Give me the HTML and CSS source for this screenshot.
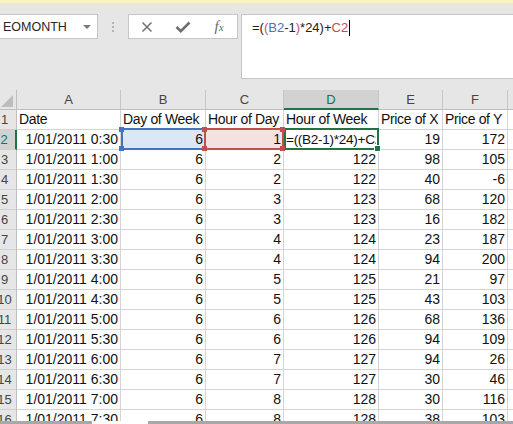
FILE: index.html
```html
<!DOCTYPE html>
<html>
<head>
<meta charset="utf-8">
<link rel="stylesheet" href="styles.css">
</head>
<body>
<div class="app">
  <div class="topstrip"></div>
  <div class="toolbar">
    <div class="namebox"><span>EOMONTH</span><span class="caret"></span></div>
    <div class="grip"><i></i><i></i><i></i></div>
    <div class="fxbtns">
      <span class="btn"><svg width="12" height="12" viewBox="0 0 12 12"><path d="M1.5 1.5 L10.5 10.5 M10.5 1.5 L1.5 10.5" stroke="#767676" stroke-width="1.6" fill="none"/></svg></span>
      <span class="btn"><svg width="16" height="12" viewBox="0 0 16 12"><path d="M1.5 6 L5.8 10.2 L14.5 1.5" stroke="#6f6f6f" stroke-width="2.6" fill="none"/></svg></span>
      <span class="btn fx"><i>f<small>x</small></i></span>
    </div>
    <div class="formula"><span>=(</span><span class="paren">(</span><span class="refb">B2</span><span>-1</span><span class="paren">)</span><span>*24)+</span><span class="refc">C2</span><span class="cursor"></span></div>
  </div>
  <div class="sheet">
    <div class="grid">
      <div class="corner"><svg width="23" height="19" viewBox="0 0 23 19"><polygon points="20,5 20,17 8,17" fill="#bdbdbd"/></svg></div>
      <div class="ch">A</div><div class="ch">B</div><div class="ch">C</div><div class="ch ch-act">D</div><div class="ch">E</div><div class="ch">F</div><div class="ch"></div>

      <div class="rh">1</div><div class="c lbl">Date</div><div class="c lbl">Day of Week</div><div class="c lbl">Hour of Day</div><div class="c lbl">Hour of Week</div><div class="c lbl">Price of X</div><div class="c lbl">Price of Y</div><div class="c"></div>

      <div class="rh rh-act">2</div><div class="c n">1/01/2011 0:30</div>
      <div class="c n sel ref-b">6<i class="h tl"></i><i class="h bl"></i></div>
      <div class="c n sel ref-c">1<i class="h tl"></i><i class="h bl"></i><i class="h tr"></i><i class="h br"></i></div>
      <div class="c sel act"><span class="clip">=((B2-1)*24)+C2</span><i class="h fill"></i></div>
      <div class="c n">19</div><div class="c n">172</div><div class="c"></div>

      <div class="rh">3</div><div class="c n">1/01/2011 1:00</div><div class="c n">6</div><div class="c n">2</div><div class="c n">122</div><div class="c n">98</div><div class="c n">105</div><div class="c"></div>
      <div class="rh">4</div><div class="c n">1/01/2011 1:30</div><div class="c n">6</div><div class="c n">2</div><div class="c n">122</div><div class="c n">40</div><div class="c n">-6</div><div class="c"></div>
      <div class="rh">5</div><div class="c n">1/01/2011 2:00</div><div class="c n">6</div><div class="c n">3</div><div class="c n">123</div><div class="c n">68</div><div class="c n">120</div><div class="c"></div>
      <div class="rh">6</div><div class="c n">1/01/2011 2:30</div><div class="c n">6</div><div class="c n">3</div><div class="c n">123</div><div class="c n">16</div><div class="c n">182</div><div class="c"></div>
      <div class="rh">7</div><div class="c n">1/01/2011 3:00</div><div class="c n">6</div><div class="c n">4</div><div class="c n">124</div><div class="c n">23</div><div class="c n">187</div><div class="c"></div>
      <div class="rh">8</div><div class="c n">1/01/2011 3:30</div><div class="c n">6</div><div class="c n">4</div><div class="c n">124</div><div class="c n">94</div><div class="c n">200</div><div class="c"></div>
      <div class="rh">9</div><div class="c n">1/01/2011 4:00</div><div class="c n">6</div><div class="c n">5</div><div class="c n">125</div><div class="c n">21</div><div class="c n">97</div><div class="c"></div>
      <div class="rh">10</div><div class="c n">1/01/2011 4:30</div><div class="c n">6</div><div class="c n">5</div><div class="c n">125</div><div class="c n">43</div><div class="c n">103</div><div class="c"></div>
      <div class="rh">11</div><div class="c n">1/01/2011 5:00</div><div class="c n">6</div><div class="c n">6</div><div class="c n">126</div><div class="c n">68</div><div class="c n">136</div><div class="c"></div>
      <div class="rh">12</div><div class="c n">1/01/2011 5:30</div><div class="c n">6</div><div class="c n">6</div><div class="c n">126</div><div class="c n">94</div><div class="c n">109</div><div class="c"></div>
      <div class="rh">13</div><div class="c n">1/01/2011 6:00</div><div class="c n">6</div><div class="c n">7</div><div class="c n">127</div><div class="c n">94</div><div class="c n">26</div><div class="c"></div>
      <div class="rh">14</div><div class="c n">1/01/2011 6:30</div><div class="c n">6</div><div class="c n">7</div><div class="c n">127</div><div class="c n">30</div><div class="c n">46</div><div class="c"></div>
      <div class="rh">15</div><div class="c n">1/01/2011 7:00</div><div class="c n">6</div><div class="c n">8</div><div class="c n">128</div><div class="c n">30</div><div class="c n">116</div><div class="c"></div>
      <div class="rh">16</div><div class="c n">1/01/2011 7:30</div><div class="c n">6</div><div class="c n">8</div><div class="c n">128</div><div class="c n">38</div><div class="c n">103</div><div class="c"></div>
    </div>
  </div>
  <div class="hbar"><span class="seg"></span><span class="gap"></span><span class="seg rest"></span></div>
</div>
</body>
</html>
```
FILE: styles.css
```css
* { box-sizing: border-box; }
html, body { margin: 0; padding: 0; }
body {
  width: 513px;
  height: 424px;
  overflow: hidden;
  background: #e6e6e6;
  font-family: "Liberation Sans", Arial, sans-serif;
}
.app { display: flex; flex-direction: column; height: 424px; }
.topstrip { height: 3px; background: #fbf2c2; flex: none; }

.toolbar {
  display: flex;
  align-items: flex-start;
  height: 87px;
  padding-top: 11px;
  flex: none;
}
.namebox {
  width: 99px;
  height: 25px;
  margin-left: -1px;
  background: #fff;
  border: 1px solid #c6c6c6;
  display: flex;
  align-items: center;
  justify-content: space-between;
  padding: 0 6px 0 3px;
  font-size: 12.5px;
  color: #262626;
}
.caret {
  width: 0; height: 0;
  border-left: 4px solid transparent;
  border-right: 4px solid transparent;
  border-top: 4px solid #7a7a7a;
}
.grip {
  width: 30px;
  height: 25px;
  display: flex;
  flex-direction: column;
  align-items: center;
  justify-content: center;
  gap: 2px;
}
.grip i { display: block; width: 2px; height: 2px; background: #b4b4b4; }
.fxbtns {
  width: 110px;
  height: 25px;
  background: #fff;
  border: 1px solid #c6c6c6;
  display: flex;
}
.btn { width: 36px; display: flex; align-items: center; justify-content: center; }
.fx i {
  font-family: "Liberation Serif", "Times New Roman", serif;
  font-size: 15px;
  color: #6a6a6a;
  font-style: italic;
}
.fx small { font-size: 11px; }
.formula {
  flex: 1;
  height: 65px;
  margin-left: 3px;
  margin-right: -2px;
  background: #fff;
  border: 1px solid #c6c6c6;
  padding: 4px 10px;
  font-size: 13px;
  line-height: 18px;
  color: #222;
  white-space: nowrap;
}
.paren { color: #b8508a; }
.refb { color: #4472c4; }
.refc { color: #c0504d; }
.cursor {
  display: inline-block;
  width: 1px;
  height: 16px;
  background: #000;
  vertical-align: -4px;
  margin-left: 1px;
}

.sheet { height: 331px; overflow: hidden; background: #fff; flex: none; }
.grid {
  display: grid;
  grid-template-columns: 24px 104px 85px 78px 95px 64px 65px 80px;
  grid-auto-rows: 20px;
  margin-left: -7px;
  width: 595px;
  font-size: 14px;
}
.corner {
  background: #e6e6e6;
  border-right: 1px solid #bfbfbf;
  border-bottom: 1px solid #bfbfbf;
}
.corner svg { display: block; }
.ch {
  background: #e6e6e6;
  border-right: 1px solid #c6c6c6;
  border-bottom: 1px solid #bfbfbf;
  text-align: center;
  font-size: 13px;
  line-height: 19px;
  color: #444;
}
.ch-act {
  background: #d2d2d2;
  color: #217346;
  border-bottom: 2px solid #217346;
}
.rh {
  background: #e6e6e6;
  border-right: 1px solid #bfbfbf;
  border-bottom: 1px solid #d0d0d0;
  text-align: center;
  font-size: 13px;
  line-height: 19px;
  color: #444;
}
.rh-act {
  background: #d2d2d2;
  color: #217346;
  border-right: 2px solid #217346;
}
.c {
  border-right: 1px solid #d4d4d4;
  border-bottom: 1px solid #d4d4d4;
  padding: 0 2px;
  line-height: 19px;
  white-space: nowrap;
  overflow: hidden;
  color: #111;
}
.lbl { letter-spacing: -0.35px; }
.n { text-align: right; }

.sel { position: relative; overflow: visible; z-index: 2; }
.sel::before {
  content: "";
  position: absolute;
  top: -2px; left: 0; right: -1px; bottom: -1px;
  border: 2px solid;
  pointer-events: none;
}
.ref-b { background: #dde6f5; }
.ref-b::before { border-color: #4472c4; }
.ref-c { background: #f6e1e1; z-index: 3; }
.ref-c::before { border-color: #c0504d; left: -2px; }
.act::before { border-color: #217346; }
.clip {
  display: block;
  overflow: hidden;
  font-size: 13.6px;
  letter-spacing: -0.3px;
}
.h { position: absolute; width: 5px; height: 5px; display: block; }
.ref-b .h { background: #4472c4; }
.ref-c .h { background: #c0504d; }
.h.tl { left: -2px; top: -3px; }
.h.bl { left: -2px; bottom: -2px; }
.ref-c .h.tl, .ref-c .h.bl { left: -4px; }
.h.tr { right: -2px; top: -3px; }
.h.br { right: -2px; bottom: -2px; }
.h.fill {
  width: 7px; height: 7px;
  right: -3px; bottom: -3px;
  background: #217346;
  border: 1px solid #fff;
}

.hbar { height: 3px; display: flex; flex: none; }
.hbar .seg { width: 92px; background: #a8a8a8; }
.hbar .gap { width: 56px; background: #fff; }
.hbar .rest { flex: 1; }
```
